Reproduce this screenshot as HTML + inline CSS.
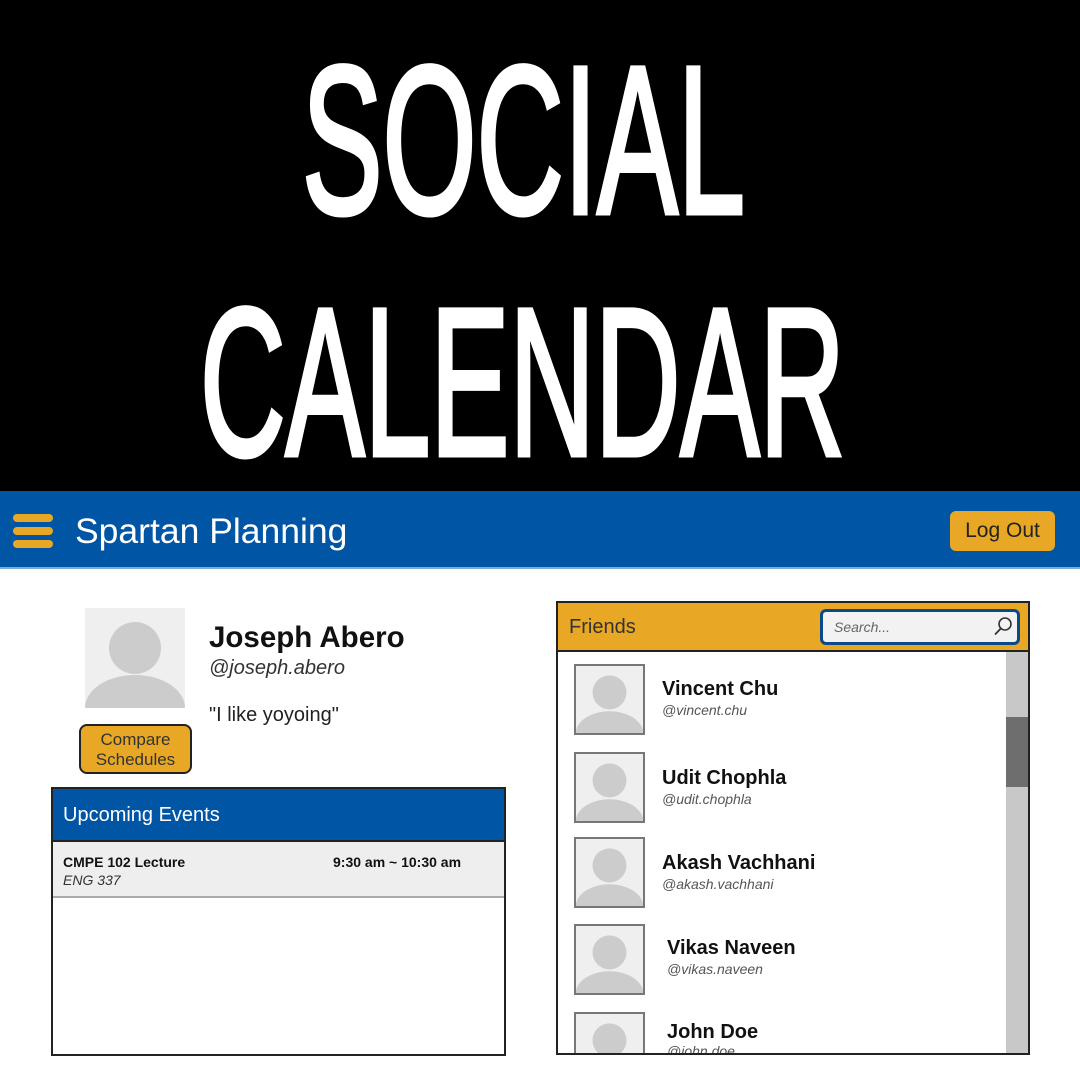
<!DOCTYPE html>
<html><head><meta charset="utf-8"><style>
*{margin:0;padding:0;box-sizing:border-box}
body{width:1080px;height:1080px;overflow:hidden;background:#fff;font-family:"Liberation Sans",Arial,sans-serif;position:relative}
.a{position:absolute}
.av{position:absolute;width:71px;height:71px;border:2px solid #777;background:#efefef;overflow:hidden}
.nm{position:absolute;font-size:20px;font-weight:bold;color:#111}
.hd{position:absolute;font-size:14px;font-style:italic;color:#555}
</style></head><body>
<div class="a" style="left:0;top:0;width:1080px;height:491px;background:#000"></div>
<svg class="a" style="left:0;top:0" width="1080" height="491">
<text x="302" y="213" textLength="443" lengthAdjust="spacingAndGlyphs" font-family="Liberation Sans Narrow, Liberation Sans, sans-serif" font-size="211" fill="#fff" stroke="#fff" stroke-width="5">SOCIAL</text>
<text x="200" y="455" textLength="645" lengthAdjust="spacingAndGlyphs" font-family="Liberation Sans Narrow, Liberation Sans, sans-serif" font-size="211" fill="#fff" stroke="#fff" stroke-width="5">CALENDAR</text>
</svg>
<div class="a" style="left:0;top:491px;width:1080px;height:78px;background:#0055a4;border-bottom:2px solid #7fa9d6"></div>
<div class="a" style="left:13px;top:514px;width:40px;height:8px;border-radius:4px;background:#e8a825"></div>
<div class="a" style="left:13px;top:527px;width:40px;height:8px;border-radius:4px;background:#e8a825"></div>
<div class="a" style="left:13px;top:540px;width:40px;height:8px;border-radius:4px;background:#e8a825"></div>
<div class="a" style="left:75px;top:511px;font-size:35.5px;color:#fff">Spartan Planning</div>
<div class="a" style="left:950px;top:511px;width:105px;height:40px;border-radius:6px;background:#e8a825;color:#222;font-size:21px;text-align:center;line-height:40px">Log Out</div>

<svg class="a" style="left:85px;top:608px" width="100" height="100"><rect width="100" height="100" fill="#efefef"/><circle cx="50" cy="40" r="26" fill="#ccc"/><ellipse cx="50" cy="100" rx="50" ry="33" fill="#ccc"/></svg>
<div class="a" style="left:209px;top:621px;font-size:29.5px;font-weight:bold;color:#111">Joseph Abero</div>
<div class="a" style="left:209px;top:657px;font-size:20px;font-style:italic;color:#333">@joseph.abero</div>
<div class="a" style="left:209px;top:704px;font-size:20px;color:#222">"I like yoyoing"</div>
<div class="a" style="left:79px;top:724px;width:113px;height:50px;border:2px solid #222;border-radius:8px;background:#e8a825;color:#333;font-size:17px;text-align:center;line-height:20px;padding-top:4px">Compare<br>Schedules</div>

<div class="a" style="left:51px;top:787px;width:455px;height:269px;border:2px solid #222;background:#fff"></div>
<div class="a" style="left:51px;top:787px;width:455px;height:55px;border:2px solid #222;background:#0055a4"></div>
<div class="a" style="left:63px;top:804px;font-size:20px;color:#fff">Upcoming Events</div>
<div class="a" style="left:53px;top:842px;width:451px;height:56px;background:#eee;border-bottom:2px solid #aaa"></div>
<div class="a" style="left:63px;top:854px;font-size:14px;font-weight:bold;color:#111">CMPE 102 Lecture</div>
<div class="a" style="left:63px;top:872px;font-size:14px;font-style:italic;color:#333">ENG 337</div>
<div class="a" style="left:333px;top:854px;font-size:14px;font-weight:bold;color:#111">9:30 am ~ 10:30 am</div>

<div class="a" style="left:556px;top:601px;width:474px;height:454px;border:2px solid #222;background:#fff;overflow:hidden">
<div class="a" style="left:0;top:0;width:470px;height:49px;background:#e8a825;border-bottom:2px solid #222"></div>
<div class="a" style="left:11px;top:13px;font-size:20px;color:#333">Friends</div>
<div class="a" style="left:262px;top:6px;width:200px;height:36px;border:3px solid #0b4a8a;border-radius:6px;background:#f2f2f2"></div>
<div class="a" style="left:276px;top:16px;font-size:14px;font-style:italic;color:#666">Search...</div>
<svg class="a" style="left:434px;top:12px" width="22" height="22"><circle cx="13" cy="9" r="6" fill="none" stroke="#333" stroke-width="1.6"/><line x1="8.8" y1="13.5" x2="3" y2="19.5" stroke="#333" stroke-width="1.8"/></svg>
<div class="a" style="left:448px;top:49px;width:22px;height:403px;background:#c8c8c8"></div>
<div class="a" style="left:448px;top:114px;width:22px;height:70px;background:#6e6e6e"></div>
</div>

<svg width="0" height="0" style="position:absolute"><defs><symbol id="p" viewBox="0 0 71 71"><rect width="71" height="71" fill="#efefef"/><circle cx="35.5" cy="28" r="18" fill="#ccc"/><ellipse cx="35.5" cy="72" rx="36" ry="24" fill="#ccc"/></symbol></defs></svg>
<div class="av" style="left:574px;top:664px"><svg width="67" height="67"><use href="#p"/></svg></div>
<div class="av" style="left:574px;top:752px"><svg width="67" height="67"><use href="#p"/></svg></div>
<div class="av" style="left:574px;top:837px"><svg width="67" height="67"><use href="#p"/></svg></div>
<div class="av" style="left:574px;top:924px"><svg width="67" height="67"><use href="#p"/></svg></div>
<div class="av" style="left:574px;top:1012px;height:41px;border-bottom:none"><svg width="67" height="67"><use href="#p"/></svg></div>

<div class="nm" style="left:662px;top:678px">Vincent Chu</div>
<div class="hd" style="left:662px;top:702px">@vincent.chu</div>
<div class="nm" style="left:662px;top:767px">Udit Chophla</div>
<div class="hd" style="left:662px;top:791px">@udit.chophla</div>
<div class="nm" style="left:662px;top:852px">Akash Vachhani</div>
<div class="hd" style="left:662px;top:876px">@akash.vachhani</div>
<div class="nm" style="left:667px;top:937px">Vikas Naveen</div>
<div class="hd" style="left:667px;top:961px">@vikas.naveen</div>
<div class="nm" style="left:667px;top:1021px">John Doe</div>
<div class="a" style="left:667px;top:1043px;width:200px;height:10px;overflow:hidden"><div class="hd" style="left:0;top:0">@john.doe</div></div>
<div class="a" style="left:556px;top:1053px;width:474px;height:2px;background:#222"></div>
</body></html>
